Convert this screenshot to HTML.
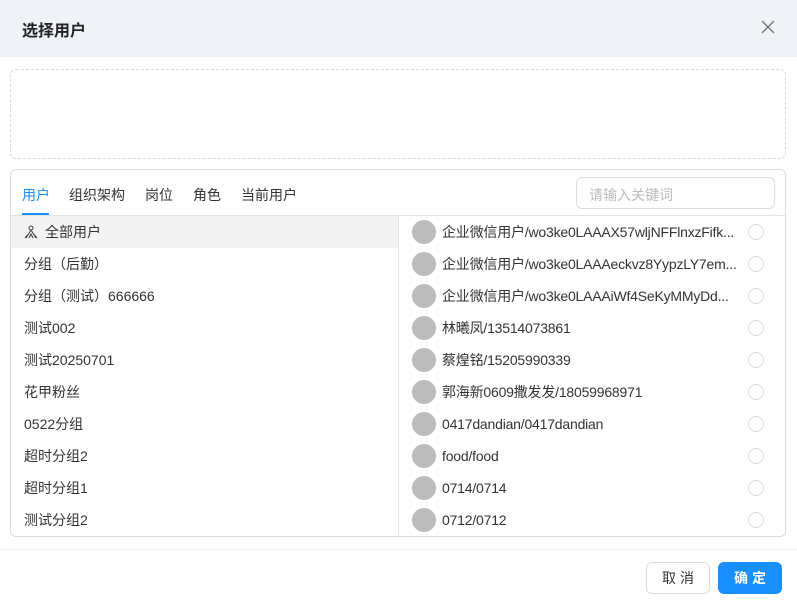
<!DOCTYPE html><html><head><meta charset="utf-8"><style>
*{box-sizing:border-box;margin:0;padding:0}
body{width:797px;height:601px;background:#fff;font-family:"Liberation Sans","Noto Sans CJK SC",sans-serif;font-size:14px;color:#333;position:relative;overflow:hidden}
.hd{position:absolute;left:0;top:0;width:797px;height:57px;background:#eff3f8}
.hd b{position:absolute;left:22px;top:17px;font-size:16px;color:#222}
.x{position:absolute;left:761px;top:20px}
.dash{position:absolute;left:10px;top:69px;width:776px;height:90px;border:1px dashed #d9d9d9;border-radius:6px}
.pn{position:absolute;left:10px;top:169px;width:776px;height:368px;border:1px solid #dcdcdc;border-radius:6px;overflow:hidden}
.tab{position:absolute;top:15px;font-size:14px;color:#333}
.ul{position:absolute;left:11px;top:43px;width:27px;height:2px;background:#1890ff}
.tl{position:absolute;left:0;top:45px;width:776px;height:1px;background:#e4e4e4}
.in{position:absolute;left:565px;top:7px;width:199px;height:32px;border:1px solid #ddd;border-radius:6px;color:#bbb;padding:7px 12px;font-size:14px}
.vl{position:absolute;left:387px;top:46px;width:1px;height:322px;background:#e4e4e4}
.l{position:absolute;left:0;width:387px;height:32px;line-height:32px;padding-left:13px}
.r{position:absolute;left:388px;width:388px;height:32px;line-height:32px;padding-left:43px;white-space:nowrap;letter-spacing:-0.2px}
.av{position:absolute;left:13px;top:4px;width:24px;height:24px;border-radius:50%;background:#bdbdbd}
.rd{position:absolute;left:349px;top:8px;width:16px;height:16px;border-radius:50%;border:1px solid #dcdcdc}
.fl{position:absolute;left:0;top:549px;width:797px;height:1px;background:#eee}
.b{position:absolute;top:562px;height:32px;border-radius:6px;text-align:center;line-height:30px;font-size:14px;letter-spacing:4px;text-indent:4px}
</style></head><body>
<div class="hd"><b>选择用户</b><svg class="x" width="14" height="14"><path d="M1 1L13 13M13 1L1 13" stroke="#777" stroke-width="1.4"/></svg></div>
<div class="dash"></div>
<div class="pn">
<span class="tab" style="left:11px;color:#1890ff">用户</span><span class="tab" style="left:58px">组织架构</span><span class="tab" style="left:134px">岗位</span><span class="tab" style="left:182px">角色</span><span class="tab" style="left:230px">当前用户</span>
<div class="ul"></div><div class="tl"></div><div class="in">请输入关键词</div><div class="vl"></div>
<div class="l" style="top:46px;background:#f3f3f3;padding-left:34px"><svg style="position:absolute;left:13px;top:9px" width="14" height="14" viewBox="0 0 14 14" fill="none" stroke="#444" stroke-width="1.1"><circle cx="7" cy="3" r="2"/><path d="M7 5L2 13M7 5L12 13M4.5 9L1 13M9.5 9L13 13M5 13L7 9L9 13"/></svg>全部用户</div>
<div class="l" style="top:78px">分组（后勤）</div>
<div class="l" style="top:110px">分组（测试）666666</div>
<div class="l" style="top:142px">测试002</div>
<div class="l" style="top:174px">测试20250701</div>
<div class="l" style="top:206px">花甲粉丝</div>
<div class="l" style="top:238px">0522分组</div>
<div class="l" style="top:270px">超时分组2</div>
<div class="l" style="top:302px">超时分组1</div>
<div class="l" style="top:334px">测试分组2</div>
<div class="r" style="top:46px"><i class="av"></i>企业微信用户/wo3ke0LAAAX57wljNFFlnxzFifk...<i class="rd"></i></div>
<div class="r" style="top:78px"><i class="av"></i>企业微信用户/wo3ke0LAAAeckvz8YypzLY7em...<i class="rd"></i></div>
<div class="r" style="top:110px"><i class="av"></i>企业微信用户/wo3ke0LAAAiWf4SeKyMMyDd...<i class="rd"></i></div>
<div class="r" style="top:142px"><i class="av"></i>林曦凤/13514073861<i class="rd"></i></div>
<div class="r" style="top:174px"><i class="av"></i>蔡煌铭/15205990339<i class="rd"></i></div>
<div class="r" style="top:206px"><i class="av"></i>郭海新0609撒发发/18059968971<i class="rd"></i></div>
<div class="r" style="top:238px"><i class="av"></i>0417dandian/0417dandian<i class="rd"></i></div>
<div class="r" style="top:270px"><i class="av"></i>food/food<i class="rd"></i></div>
<div class="r" style="top:302px"><i class="av"></i>0714/0714<i class="rd"></i></div>
<div class="r" style="top:334px"><i class="av"></i>0712/0712<i class="rd"></i></div>
</div>
<div class="fl"></div>
<div class="b" style="left:646px;width:64px;border:1px solid #dcdcdc;color:#333">取消</div>
<div class="b" style="left:718px;width:64px;background:#1890ff;color:#fff;font-weight:bold;line-height:32px">确定</div>
</body></html>
